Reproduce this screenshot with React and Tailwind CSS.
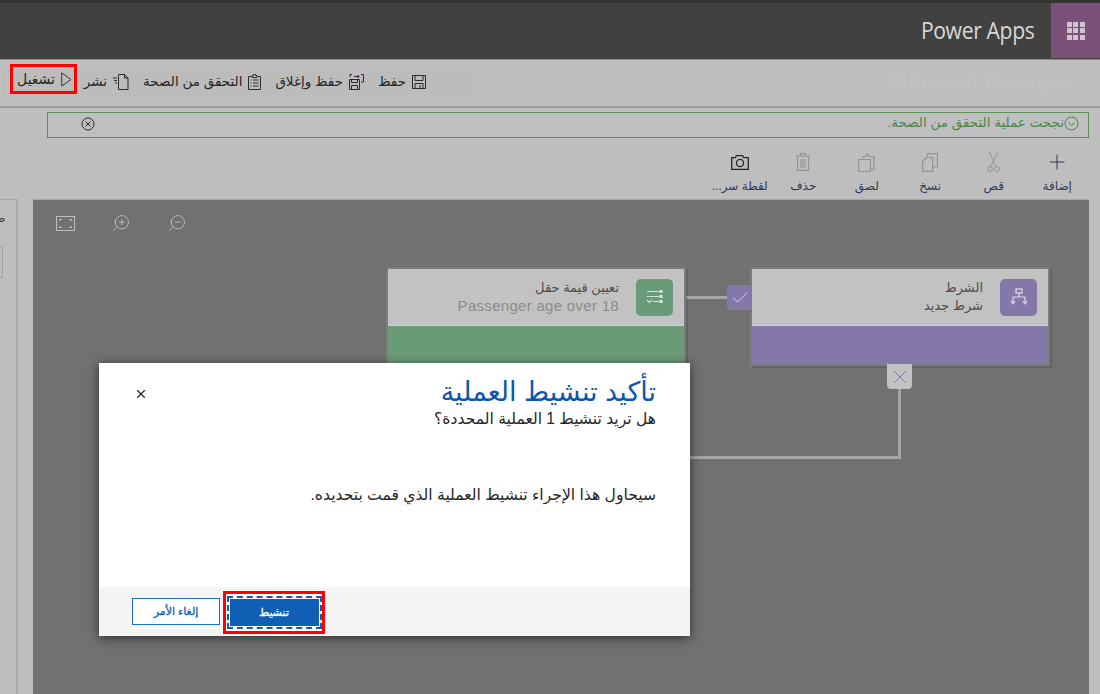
import React from 'react';
import { Check, ChevronDown, Plus, X, ZoomIn, ZoomOut } from 'lucide-react';

const FONT = "font-['Liberation_Sans','DejaVu_Sans','Noto_Sans',sans-serif]";

const ActionButton = ({ icon, label, disabled }) => (
  <div className="flex flex-col items-center w-[63.5px]">
    <div className={`h-[24px] flex items-center ${disabled ? 'text-[#949494]' : 'text-[#2f3a55]'}`}>{icon}</div>
    <span className="mt-[4px] text-[12px] leading-[16px] text-[#303a56] whitespace-nowrap">{label}</span>
  </div>
);

const CmdButton = ({ icon, label }) => (
  <div className="flex items-center gap-[6px] text-[#262626]">
    {icon}
    <span className="text-[13.5px] leading-[18px] whitespace-nowrap">{label}</span>
  </div>
);

const SaveIcon = () => (
  <svg width="14" height="14" viewBox="0 0 14 14" fill="none" stroke="#2b2b2b">
    <path d="M.5.5h13v13H.5zM3 .5v5h8v-5M3 13.5V8.5h8v5M8 10v3" />
  </svg>
);

const SaveCloseIcon = () => (
  <svg width="15" height="16" viewBox="0 0 15 16" fill="none" stroke="#2b2b2b">
    <path d="M.5 5.5h10v10H.5zM2.5 5.5v3h6v-3M2.5 15.5v-4h6v4" />
    <path d="M1 3V.5h2M12 .5h2.5V8H12M5 2.5h5M8.5 1l1.5 1.5L8.5 4" stroke="#3a1f4a" />
  </svg>
);

const ChecklistIcon = () => (
  <svg width="13" height="16" viewBox="0 0 13 16" fill="none" stroke="#2b2b2b">
    <path d="M3.5 2.5H.5v13h12v-13h-3M4 3.5V1.5h1.5V.5h2v1H9v2z" />
    <path d="M2.5 6h1M5 6h5.5M2.5 9h1M5 9h5.5M2.5 12h1M5 12h5.5" />
  </svg>
);

const PublishIcon = () => (
  <svg width="16" height="16" viewBox="0 0 16 16" fill="none" stroke="#2b2b2b">
    <path d="M5.5.5h6l3.5 3.5v11.5H5.5zM11.5.5V4H15" />
    <path d="M0 4h4M1 6.5h3M2 9h2" />
  </svg>
);

const PlayIcon = () => (
  <svg width="11" height="15" viewBox="0 0 11 15" fill="none" stroke="#3a3a3a">
    <path d="M.7.9v13.2L10 7.5z" />
  </svg>
);

const ScissorsIcon = () => (
  <svg width="13" height="22" viewBox="0 0 13 22" fill="none" stroke="currentColor">
    <path d="M2 .5l7 15M11 .5l-7 15" />
    <circle cx="3" cy="18" r="2.5" />
    <circle cx="10" cy="18" r="2.5" />
  </svg>
);

const CopyIcon = () => (
  <svg width="16" height="19" viewBox="0 0 16 19" fill="none" stroke="currentColor" strokeWidth="1.2">
    <path d="M5.5 4.5V.6H15.4V14H11M.6 8.5l4-4h6V18.4H.6z" />
  </svg>
);

const PasteIcon = () => (
  <svg width="17" height="19" viewBox="0 0 17 19" fill="none" stroke="currentColor" strokeWidth="1.2">
    <path d="M5 5V3.5h2.5L9.5.8l2 2.7H16V16h-3.5" />
    <path d="M.6 6.5h11.8v12H.6z" />
  </svg>
);

const TrashIcon = () => (
  <svg width="14" height="18" viewBox="0 0 14 18" fill="none" stroke="currentColor" strokeWidth="1.1">
    <path d="M0 3h14M4.5 3V.6h5V3M1.5 3v14.4h11V3" />
    <path d="M5 6v9M7 6v9M9 6v9" />
  </svg>
);

const CameraIcon = () => (
  <svg width="18" height="15" viewBox="0 0 18 15" fill="none" stroke="#262626" strokeWidth="1.3">
    <path d="M.7 2.7h3.5L5.5.7h6l1.3 2h4.5v11.6H.7z" />
    <circle cx="9" cy="8" r="3.6" />
  </svg>
);

const VariableIcon = () => (
  <svg width="18" height="16" viewBox="0 0 18 16" fill="none" stroke="#d6e5d9" strokeWidth="1.2">
    <path d="M1 2.5h12M1 7.5h12M7 12.5h6M1 11l2.5 2.5L6 11" />
    <rect x="13.5" y="1" width="3" height="3" fill="#d6e5d9" stroke="none" />
    <rect x="13.5" y="6" width="3" height="3" fill="#d6e5d9" stroke="none" />
    <rect x="13.5" y="11" width="3" height="3" fill="#d6e5d9" stroke="none" />
  </svg>
);

const ConditionIcon = () => (
  <svg width="18" height="18" viewBox="0 0 18 18" fill="none" stroke="#e0dcea" strokeWidth="1.2">
    <rect x="6" y="1" width="6" height="4" />
    <path d="M9 5v4M3 14V9h12v5M1 13l2 3 2-3M13 13l2 3 2-3" />
  </svg>
);

const FitIcon = () => (
  <svg width="19" height="15" viewBox="0 0 19 15" fill="none" stroke="#bdbdbd" strokeWidth="1">
    <rect x="0.5" y="0.5" width="18" height="14" />
    <path d="M3.5 5V3.5H6M13 3.5h2.5V5M15.5 10v1.5H13M6 11.5H3.5V10" />
  </svg>
);

const Node = ({ left, color, icon, barHeight, children }) => (
  <div className={`absolute top-[67px] w-[300px] border-2 border-[#7b7b7b] shadow-[2px_2px_0_rgba(0,0,0,0.12)] ${left}`}>
    <div dir="rtl" className="h-[57px] bg-[#c2c2c2] flex items-center px-[11px] gap-[17px] border-b border-[#d2d2d2]">
      <div className={`w-[37px] h-[37px] rounded-[5px] flex items-center justify-center ${color}`}>{icon}</div>
      {children}
    </div>
    <div className={`${barHeight} ${color}`} />
  </div>
);

export default function App() {
  return (
    <div dir="ltr" className={`${FONT} relative w-[1100px] h-[694px] overflow-hidden bg-[#bebebe] flex flex-col`}>
      {/* Top bar */}
      <header className="h-[60px] shrink-0 bg-[#414141] border-t-[3px] border-[#333333] border-b border-b-[#8a8a8a] flex justify-end items-stretch">
        <span className="self-center mr-[17px] mb-[3px] text-[23px] leading-[28px] text-[#d8d8d8] font-['Open_Sans',sans-serif] tracking-[-0.4px] [transform:scaleX(0.92)] origin-right">Power Apps</span>
        <div className="w-[49px] mb-[1px] bg-[#7b5179] flex items-center justify-center">
          <div className="grid grid-cols-3 gap-[1.5px]">
            {[0, 1, 2, 3, 4, 5, 6, 7, 8].map((i) => (
              <div key={i} className="w-[5px] h-[5px] bg-[#d0c4cf]" />
            ))}
          </div>
        </div>
      </header>

      {/* Command bar */}
      <div className="h-[48px] shrink-0 border-b-2 border-[#9d9d9d] flex items-center justify-between pl-[3px] pr-[27px] pb-[2px]">
        <div dir="rtl" className="w-[469px] h-[30px] bg-[#bcbcbc] flex items-center pr-[46px] gap-[14px]">
          <CmdButton icon={<SaveIcon />} label="حفظ" />
          <CmdButton icon={<SaveCloseIcon />} label="حفظ وإغلاق" />
          <CmdButton icon={<ChecklistIcon />} label="التحقق من الصحة" />
          <CmdButton icon={<PublishIcon />} label="نشر" />
        </div>
        <div className="flex items-center gap-[6px] text-[#c3c3c3] text-[16.5px]">
          <ChevronDown size={16} strokeWidth={1.2} />
          <span>ID Required :Passengers</span>
        </div>
      </div>

      {/* Validation message */}
      <div className="mt-[4px] ml-[47px] mr-[11px] h-[26px] shrink-0 border border-[#5d8f57] bg-[#bfbfc1] flex items-center justify-between pl-[33px] pr-[9px] pb-[3px]">
        <svg width="14" height="14" viewBox="0 0 14 14" fill="none" stroke="#2b2b2b" strokeWidth="1">
          <circle cx="7" cy="7" r="6" />
          <path d="M4.5 4.5l5 5M9.5 4.5l-5 5" />
        </svg>
        <div dir="rtl" className="flex items-center text-[#4a8a44] text-[13.5px]">
          <svg width="15" height="15" viewBox="0 0 15 15" fill="none" stroke="#4a8a44" strokeWidth="1">
            <circle cx="7.5" cy="7.5" r="6.5" />
            <path d="M4.5 6.5l3 3 3-3" />
          </svg>
          <span>نجحت عملية التحقق من الصحة.</span>
        </div>
      </div>

      {/* Action row */}
      <div dir="rtl" className="h-[61px] shrink-0 flex items-start pr-[11px] pt-[12px]">
        <ActionButton icon={<Plus size={24} strokeWidth={1} />} label="إضافة" />
        <ActionButton disabled icon={<ScissorsIcon />} label="قص" />
        <ActionButton disabled icon={<CopyIcon />} label="نسخ" />
        <ActionButton disabled icon={<PasteIcon />} label="لصق" />
        <ActionButton disabled icon={<TrashIcon />} label="حذف" />
        <ActionButton icon={<CameraIcon />} label="لقطة سر..." />
      </div>

      {/* Body */}
      <div className="flex-1 flex min-h-0">
        <div className="w-[18px] border-r-2 border-t border-[#a8a8a8] relative overflow-hidden">
          <span className="absolute -left-[8px] top-[10px] text-[11px] text-[#303030]">ص</span>
          <div className="absolute left-0 top-[46px] w-[3px] h-[32px] border border-l-0 border-[#a2a2a2]" />
        </div>
        <div className="ml-[15px] flex-1 mr-[11px] bg-[#717171] border-t border-[#a8a8a8] relative overflow-hidden">
          <div className="flex items-center gap-[36px] pl-[23px] pt-[13px]">
            <FitIcon />
            <ZoomIn size={20} strokeWidth={1} className="text-[#c4c4c4] -scale-x-100" />
            <ZoomOut size={20} strokeWidth={1} className="text-[#c4c4c4] -scale-x-100" />
          </div>

          {/* connectors */}
          <div className="absolute left-[652px] top-[96px] w-[42px] h-[3px] bg-[#a6a6a6]" />
          <div className="absolute left-[300px] top-[256px] w-[567px] h-[3px] bg-[#a6a6a6]" />
          <div className="absolute left-[865px] top-[189px] w-[3px] h-[70px] bg-[#a6a6a6]" />

          <Node left="left-[353px]" color="bg-[#6a9b79]" icon={<VariableIcon />} barHeight="h-[90px]">
            <div className="text-[13px] leading-[18px]">
              <div className="text-[#4d4d4d]">تعيين قيمة حقل</div>
              <div dir="ltr" className="text-right text-[#8c8c8c] text-[15px] font-light tracking-[0.3px]">Passenger age over 18</div>
            </div>
          </Node>

          <Node left="left-[717px]" color="bg-[#8378a8]" icon={<ConditionIcon />} barHeight="h-[38px]">
            <div className="text-[13px] leading-[18px] text-[#4d4d4d]">
              <div>الشرط</div>
              <div>شرط جديد</div>
            </div>
          </Node>

          <div className="absolute left-[694px] top-[85px] w-[25px] h-[25px] rounded-l-[4px] bg-[#8378a8] flex items-center justify-center">
            <Check size={20} strokeWidth={1} className="text-[#e6e3ee]" />
          </div>
          <div className="absolute left-[854px] top-[164px] w-[25px] h-[25px] rounded-b-[4px] bg-[#c2c2c2] flex items-center justify-center">
            <X size={22} strokeWidth={1} className="text-[#7d70a6]" />
          </div>
        </div>
      </div>

      {/* Confirmation dialog */}
      <div className="absolute left-[99px] top-[363px] w-[591px] h-[273px] bg-white shadow-[0_2px_10px_rgba(0,0,0,0.6)] flex flex-col">
        <div className="flex-1 relative px-[34px] pt-[13px]" dir="rtl">
          <h2 className="text-[27px] leading-[33px] text-[#0a56b0]">تأكيد تنشيط العملية</h2>
          <p className="text-[15.6px] leading-[20px] text-[#262626]">هل تريد تنشيط 1 العملية المحددة؟</p>
          <p className="mt-[56px] text-[15.6px] leading-[20px] text-[#262626]">سيحاول هذا الإجراء تنشيط العملية الذي قمت بتحديده.</p>
          <X size={14} strokeWidth={2} className="absolute left-[35px] top-[24px] text-[#2b2b2b]" />
        </div>
        <div className="h-[49px] bg-[#f4f4f4] flex items-center pl-[33px] gap-[3px]">
          <button className="w-[88px] h-[27px] bg-white border border-[#1c6fc4] text-[#0f5fb5] text-[11px] [-webkit-text-stroke:0.3px]">إلغاء الأمر</button>
          <div className="w-[102px] h-[43px] mt-[2px] border-[3px] border-[#ff0000] bg-white flex items-center justify-center">
            <div className="border-2 border-dashed border-[#0f5fb5] p-[1px]">
              <button className="block w-[89px] h-[27px] bg-[#0f5fb5] text-white text-[11px] [-webkit-text-stroke:0.3px]">تنشيط</button>
            </div>
          </div>
        </div>
      </div>

      {/* Highlight around run button */}
      <div dir="rtl" className="absolute left-[10px] top-[64px] w-[67px] h-[30px] border-[3px] border-[#ff0000] flex items-center pr-[2px] gap-[6px] text-[#262626]">
        <PlayIcon />
        <span className="text-[14px] whitespace-nowrap">تشغيل</span>
      </div>
    </div>
  );
}
